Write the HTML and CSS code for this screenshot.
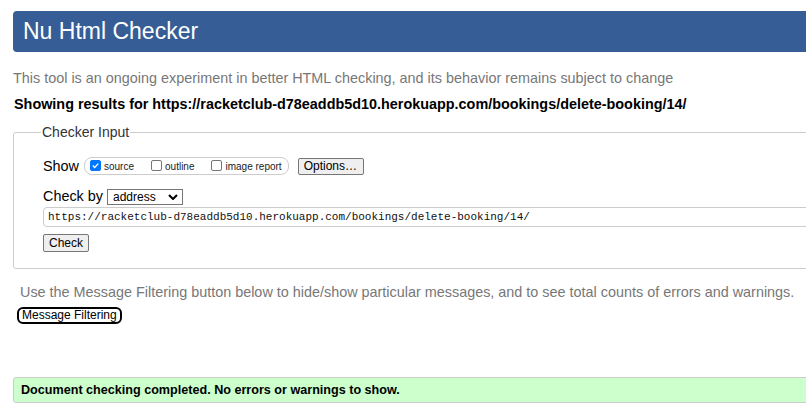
FILE: index.html
```html
<!DOCTYPE html>
<html lang="en">
<head>
<meta charset="utf-8">
<title>Nu Html Checker</title>
<link rel="stylesheet" href="styles.css">
</head>
<body>
<div class="page">
  <h1 class="title">Nu Html Checker</h1>
  <p class="intro">This tool is an ongoing experiment in better HTML checking, and its behavior remains subject to change</p>
  <p class="results">Showing results for https://racketclub-d78eaddb5d10.herokuapp.com/bookings/delete-booking/14/</p>
  <fieldset class="checker">
    <legend class="legend">Checker Input</legend>
    <div class="row show-row">
      <span class="label">Show</span>
      <span class="opts">
        <label class="opt"><span class="cb checked"><svg viewBox="0 0 11 11" width="11" height="11"><path d="M2.2 5.6 L4.5 7.9 L8.9 3.2" fill="none" stroke="#fff" stroke-width="1.7"/></svg></span>source</label>
        <label class="opt"><span class="cb"></span>outline</label>
        <label class="opt"><span class="cb"></span>image report</label>
      </span>
      <span class="btn options">Options…</span>
    </div>
    <div class="row by-row">
      <span class="label">Check by</span>
      <span class="select">address<svg class="chev" viewBox="0 0 10 6" width="10" height="6"><path d="M1 1 L5 5 L9 1" fill="none" stroke="#000" stroke-width="2"/></svg></span>
    </div>
    <div class="url">https://racketclub-d78eaddb5d10.herokuapp.com/bookings/delete-booking/14/</div>
    <div class="row"><span class="btn check">Check</span></div>
  </fieldset>
  <p class="filter-note">Use the Message Filtering button below to hide/show particular messages, and to see total counts of errors and warnings.</p>
  <span class="filter-btn">Message Filtering</span>
  <div class="success">Document checking completed. No errors or warnings to show.</div>
</div>
</body>
</html>
```
FILE: styles.css
```css
html { overflow: hidden; }
body {
  margin: 0;
  font-family: "Liberation Sans", Arial, sans-serif;
  color: #000;
  background: #fff;
}
.page {
  width: 860px;
  padding-left: 13px;
  padding-top: 11px;
}
.title {
  margin: 0;
  height: 41px;
  line-height: 41px;
  background: #365d95;
  color: #fff;
  font-weight: normal;
  font-size: 23px;
  padding-left: 10px;
  border-radius: 4px;
}
.intro {
  margin: 18px 0 0;
  font-size: 14.4px;
  line-height: 17px;
  color: #777;
}
.results {
  margin: 9px 0 0;
  font-size: 14.4px;
  line-height: 17px;
  font-weight: bold;
  padding-left: 1px;
}
.checker {
  margin: 11px 0 0;
  border: 1px solid #ccc;
  border-radius: 3px;
  padding: 8px 28px 16px 29px;
}
.legend {
  font-size: 14px;
  line-height: 16px;
  color: #333;
  padding: 0 1px;
  margin-left: -2px;
}
.row {
  display: flex;
  align-items: center;
}
.label { font-size: 14.4px; line-height: 17px; }
.show-row { margin-top: 9px; }
.opts {
  display: inline-flex;
  align-items: center;
  margin-left: 5px;
  border: 1px solid #ccc;
  border-radius: 8px;
  height: 16px;
  padding: 0 6px 0 5px;
}
.opt {
  display: inline-flex;
  align-items: center;
  font-size: 10px;
  color: #222;
  margin-right: 17px;
}
.opt:last-child { margin-right: 0; }
.cb {
  display: inline-block;
  width: 9px;
  height: 9px;
  border: 1px solid #767676;
  border-radius: 2px;
  margin-right: 3px;
  box-sizing: content-box;
  position: relative;
  top: -1px;
}
.cb.checked {
  background: #0075ff;
  border-color: #0075ff;
}
.cb svg { display: block; width: 9px; height: 9px; }
.btn {
  display: inline-block;
  background: #efefef;
  border: 1px solid #767676;
  border-radius: 2px;
  font-size: 12px;
  line-height: 15px;
  padding: 0 5px;
}
.options { margin-left: 9px; padding: 0 6px 0 5px; }
.by-row { margin-top: 13px; }
.select {
  display: inline-flex;
  align-items: center;
  justify-content: space-between;
  margin-left: 4px;
  width: 65px;
  height: 14px;
  border: 1px solid #767676;
  font-size: 12px;
  padding: 0 4px 0 5px;
  border-radius: 0;
}
.chev { display: block; }
.url {
  margin-top: 2px;
  border: 1px solid #ccc;
  border-radius: 4px;
  height: 18px;
  line-height: 18px;
  font-family: "Liberation Mono", "DejaVu Sans Mono", monospace;
  font-size: 11px;
  padding-left: 4px;
  color: #111;
}
.row .check { margin-top: 7px; padding: 0 5px; line-height: 16px; }
.filter-note {
  margin: 15px 0 0 7px;
  font-size: 14.4px;
  line-height: 17px;
  color: #777;
}
.filter-btn {
  display: inline-block;
  margin: 6px 0 0 4px;
  border: 2px solid #000;
  border-radius: 6px;
  font-size: 12px;
  line-height: 13px;
  padding: 0 3px;
}
.success {
  margin-top: 53px;
  background: #ccffcc;
  border: 1px solid #ccc;
  border-radius: 3px;
  font-size: 12.6px;
  font-weight: bold;
  line-height: 24px;
  padding-left: 7px;
}
```
